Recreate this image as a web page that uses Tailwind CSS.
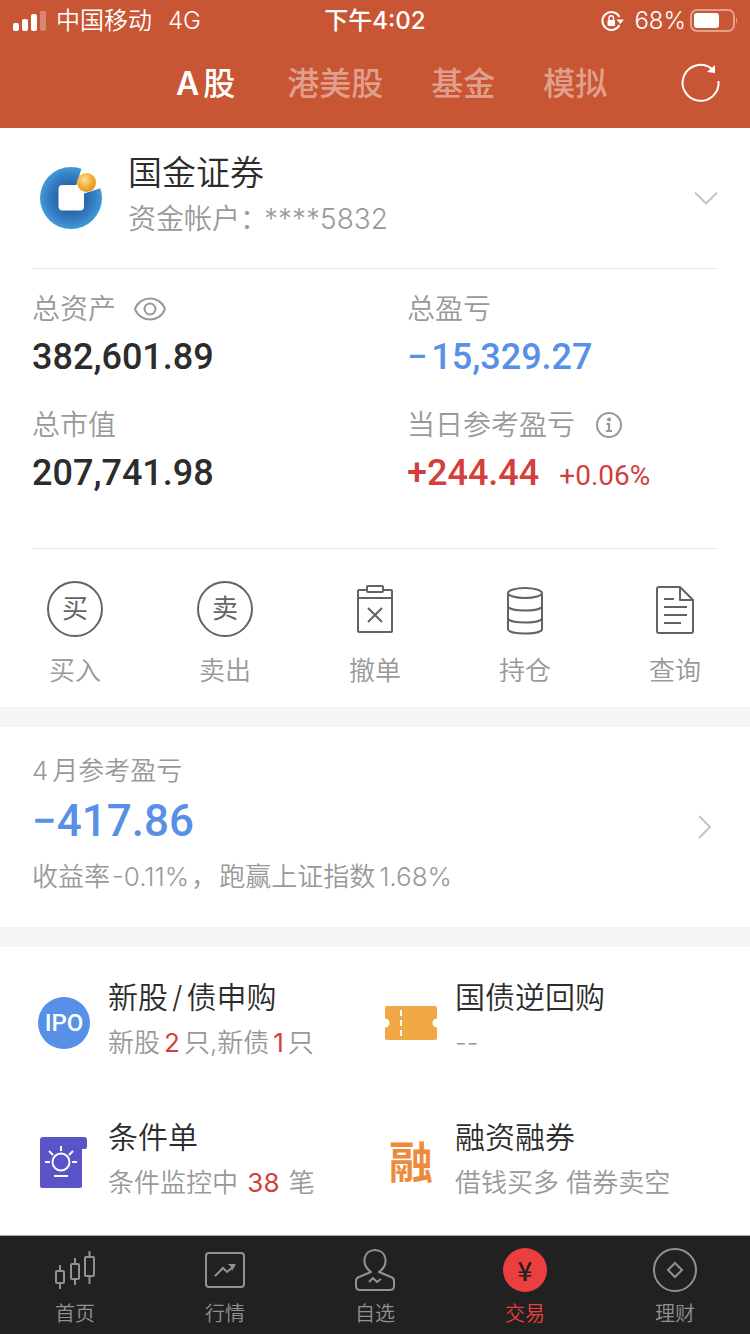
<!DOCTYPE html>
<html lang="zh-CN">
<head>
<meta charset="utf-8">
<meta name="viewport" content="width=device-width, initial-scale=1">
<title>交易</title>
<script src="https://cdn.jsdelivr.net/npm/@tailwindcss/browser@4"></script>
</head>
<body class="bg-white font-['Inter','Noto_Sans_CJK_SC',sans-serif] font-[350] text-[#999999]">
<div class="flex min-h-screen flex-col">

  <header class="bg-[#c85533] text-white">
    <div class="grid h-10 grid-cols-[1fr_auto_1fr] items-center px-3 pt-0.5 text-2xl">
      <div class="flex items-center">
        <svg class="mr-2 h-5 w-9" viewBox="0 0 36 20" fill="#fff" aria-hidden="true">
          <rect x="1" y="12" width="6" height="8" rx="2"/><rect x="10" y="8" width="6" height="12" rx="2"/><rect x="19" y="3" width="6" height="17" rx="2"/><rect x="28" y="-1" width="6" height="21" rx="2" opacity=".3"/>
        </svg>
        <span>中国移动</span><span class="ml-4">4G</span>
      </div>
      <div class="font-medium">下午4:02</div>
      <div class="flex items-center justify-end">
        <svg class="mr-2.5 h-6 w-6" viewBox="0 0 24 24" fill="none" stroke="#fff" stroke-width="2" aria-label="方向锁定">
          <path d="M19.500 16A9 9 0 1 1 19.500 8"/><path d="M16.500 10.500h7.500l-3.700 4.500z" fill="#fff" stroke="none"/>
          <rect x="7.500" y="11" width="7.500" height="6" rx="1" fill="#fff" stroke="none"/><path d="M9 11V9a2.200 2.200 0 0 1 4.500 0v2" stroke-width="1.500"/>
        </svg>
        <span>68%</span>
        <svg class="ml-1 h-6 w-12" viewBox="0 0 48 24" fill="none" aria-label="电量">
          <rect x="1" y="1" width="43" height="21" rx="6" stroke="#fff" stroke-opacity=".45" stroke-width="2"/><rect x="4" y="4" width="25" height="15" rx="3" fill="#fff"/><path d="M46 8q2 3.500 0 7z" fill="#fff" opacity=".5"/>
        </svg>
      </div>
    </div>
    <div class="flex h-22 items-center justify-between pr-7">
      <div class="flex flex-1 gap-12 pl-44 text-[32px] leading-10 font-medium text-white/45">
        <button type="button" class="mr-1 whitespace-nowrap text-white"><span class="mr-1 font-semibold">A</span>股</button>
        <button type="button" class="whitespace-nowrap">港美股</button>
        <button type="button" class="whitespace-nowrap">基金</button>
        <button type="button" class="whitespace-nowrap">模拟</button>
      </div>
      <button type="button" aria-label="刷新">
        <svg class="h-11 w-11" viewBox="0 0 44 44" fill="none" stroke="#fff" stroke-width="2">
          <path d="M40.500 19A18 18 0 1 1 33.500 6.500"/><path d="M37 3v8l-8-1z" fill="#fff" stroke="none"/>
        </svg>
      </button>
    </div>
  </header>

  <main>
    <section class="mx-8 flex h-[141px] items-center border-b border-[#ececec]">
      <svg class="ml-2 h-[62px] w-[62px] shrink-0" viewBox="0 0 62 62" aria-hidden="true">
        <defs>
          <radialGradient id="ring" cx=".5" cy=".5" r=".5"><stop offset=".4" stop-color="#2864a8"/><stop offset=".75" stop-color="#357fc4"/><stop offset="1" stop-color="#419ad8"/></radialGradient>
          <radialGradient id="ball" cx=".4" cy=".35" r=".65"><stop offset="0" stop-color="#fde3a0"/><stop offset=".5" stop-color="#f5b63c"/><stop offset="1" stop-color="#e8922a"/></radialGradient>
        </defs>
        <circle cx="31" cy="31" r="31" fill="url(#ring)"/>
        <path d="M42 0H64V20L44 26.500L36 19Z" fill="#fff"/>
        <rect x="18.500" y="18" width="25.500" height="25.500" rx="4" fill="#fff"/>
        <circle cx="46.500" cy="15.500" r="9.500" fill="url(#ball)"/>
      </svg>
      <div class="ml-6.5 flex-1 pb-1">
        <h1 class="text-[34px] leading-10 text-[#2c2c2c]">国金证券</h1>
        <p class="mt-1.5 text-[28px] leading-10">资金帐户：<span class="-ml-1">****5832</span></p>
      </div>
      <button type="button" class="-mr-0.5" aria-label="切换账户">
        <svg class="h-7 w-7" viewBox="0 0 28 28" fill="none" stroke="#c4c4c4" stroke-width="2"><path d="M3 8.500L14 19.500L25 8.500"/></svg>
      </button>
    </section>

    <section class="grid grid-cols-2 gap-y-8 pt-6 pb-13 text-[28px] leading-8">
      <div class="pl-8">
        <div class="flex items-center">总资产
          <button type="button" class="ml-4" aria-label="隐藏金额"><svg class="h-6 w-9" viewBox="0 0 36 24" fill="none" stroke="#999" stroke-width="2"><path d="M3 12C8 -2 28 -2 33 12C28 26 8 26 3 12Z"/><circle cx="18" cy="12" r="5.500"/></svg></button>
        </div>
        <div class="mt-3 font-['Roboto'] text-4xl leading-10 font-medium text-[#2c2c2c]">382,601.89</div>
      </div>
      <div class="pl-8">
        <div>总盈亏</div>
        <div class="mt-3 font-['Roboto'] text-4xl leading-10 font-medium text-[#5890e8]"><span class="mr-1">−</span>15,329.27</div>
      </div>
      <div class="pl-8">
        <div>总市值</div>
        <div class="mt-3 font-['Roboto'] text-4xl leading-10 font-medium text-[#2c2c2c]">207,741.98</div>
      </div>
      <div class="pl-8">
        <div class="flex items-center">当日参考盈亏
          <button type="button" class="ml-5" aria-label="说明"><svg class="h-7 w-7" viewBox="0 0 28 28" fill="none" stroke="#999" stroke-width="2"><circle cx="14" cy="14" r="12"/><circle cx="14" cy="8.500" r="2" fill="#999" stroke="none"/><path d="M11.500 13H14v7M11 20h6" stroke-width="2.200"/></svg></button>
        </div>
        <div class="mt-3 flex items-baseline gap-5 font-['Roboto'] text-4xl leading-10 font-medium text-[#d33f3a]">+244.44<span class="text-[28px] font-normal">+0.06%</span></div>
      </div>
    </section>

    <hr class="mx-8 border-t border-[#ececec]">
    <section class="grid grid-cols-5 pt-8 pb-5 text-[26px] leading-8">
      <button type="button" class="flex flex-col items-center gap-4.5">
        <span class="flex h-14 w-14 items-center justify-center rounded-full border-2 border-[#636363] text-[26px] font-normal text-[#636363]">买</span>买入
      </button>
      <button type="button" class="flex flex-col items-center gap-4.5">
        <span class="flex h-14 w-14 items-center justify-center rounded-full border-2 border-[#636363] text-[26px] font-normal text-[#636363]">卖</span>卖出
      </button>
      <button type="button" class="flex flex-col items-center gap-4.5">
        <svg class="h-14 w-14" viewBox="0 0 56 56" fill="none" stroke="#636363" stroke-width="2" stroke-linejoin="round"><path d="M20 9H12q-1 0-1 1V50q0 1 1 1H44q1 0 1-1V10q0-1-1-1H36M11 17H45M21 27L35 41M35 27L21 41"/><rect x="20" y="5" width="16" height="6" rx="1"/></svg>撤单
      </button>
      <button type="button" class="flex flex-col items-center gap-4.5">
        <svg class="h-14 w-14" viewBox="0 0 56 56" fill="none" stroke="#636363" stroke-width="2"><ellipse cx="28" cy="12" rx="17" ry="5"/><path d="M11 12V48C11 54 45 54 45 48V12M11 25C11 31 45 31 45 25M11 37C11 43 45 43 45 37"/></svg>持仓
      </button>
      <button type="button" class="flex flex-col items-center gap-4.5">
        <svg class="h-14 w-14" viewBox="0 0 56 56" fill="none" stroke="#636363" stroke-width="2" stroke-linejoin="round"><path d="M33 6H12q-2 0-2 2V50q0 2 2 2H44q2 0 2-2V19ZM33 6V19H46M17 18H27M17 26H40M17 34H40M17 42H34"/></svg>查询
      </button>
    </section>

    <div class="h-5 bg-[#f5f5f5]"></div>

    <a href="#month" class="flex h-50 items-center px-8">
      <div class="flex-1 pb-1.5 text-[26px] leading-8">
        <div><span class="mr-1">4</span>月参考盈亏</div>
        <div class="mt-2.5 font-['Roboto'] text-[44px] leading-12 font-medium text-[#5890e8]">−417.86</div>
        <div class="mt-4">收益率<span class="mx-0.5">-0.11%</span>，<span class="ml-0.5">跑赢上证指数</span><span class="ml-1">1.68%</span></div>
      </div>
      <svg class="h-7 w-7" viewBox="0 0 28 28" fill="none" stroke="#c4c4c4" stroke-width="2"><path d="M9 3L20 14L9 25"/></svg>
    </a>

    <div class="h-5 bg-[#f5f5f5]"></div>

    <section class="grid grid-cols-[347fr_403fr] gap-y-14.5 pt-7.5 pb-8 text-[26px] leading-8">
      <a href="#ipo" class="flex items-center pl-9.5">
        <span class="mt-2.5 mr-4.5 flex h-13 w-13 items-center justify-center rounded-full bg-[#5890e8] font-['Roboto'] text-2xl font-medium text-white">IPO</span>
        <span class="flex flex-col gap-2.5"><span class="text-[30px] leading-10 text-[#2c2c2c]">新股<span class="mx-1">/</span>债申购</span><span>新股<span class="mx-1 font-normal text-[#d33f3a]">2</span>只,新债<span class="mx-1 font-normal text-[#d33f3a]">1</span>只</span></span>
      </a>
      <a href="#repo" class="flex items-center pl-9.5">
        <svg class="mt-2.5 mr-4.5 h-13 w-13" viewBox="0 0 52 52"><path d="M2 9H50q2 0 2 2v10.500a4.500 4.500 0 0 0 0 9V41q0 2-2 2H2q-2 0-2-2V30.500a4.500 4.500 0 0 0 0-9V11q0-2 2-2Z" fill="#f0a844"/><path d="M16 13v26" stroke="#fff" stroke-width="2" stroke-dasharray="6 4"/></svg>
        <span class="flex flex-col gap-2.5"><span class="text-[30px] leading-10 text-[#2c2c2c]">国债逆回购</span><span>--</span></span>
      </a>
      <a href="#condition" class="flex items-center pl-9.5">
        <svg class="mt-2.5 mr-4.5 h-13 w-13" viewBox="0 0 52 52"><path d="M5 0H46q3 0 3 3v7q0 2-2 2H44V49q0 2-2 2H4q-2 0-2-2V3q0-3 3-3Z" fill="#5955c9"/><path d="M16 39H30M7 25h5M34 25h5M23 9v5M11 14l4 4M35 14l-4 4" stroke="#fff" stroke-width="2"/><circle cx="23" cy="25" r="8.500" fill="none" stroke="#fff" stroke-width="2"/></svg>
        <span class="flex flex-col gap-2.5"><span class="text-[30px] leading-10 text-[#2c2c2c]">条件单</span><span>条件监控中 <span class="mx-0.5 font-normal text-[#d33f3a]">38</span> 笔</span></span>
      </a>
      <a href="#margin" class="flex items-center pl-9.5">
        <span class="mt-2.5 mr-4.5 flex h-13 w-13 items-center justify-center text-[44px] font-bold text-[#ec8b3c]">融</span>
        <span class="flex flex-col gap-2.5"><span class="text-[30px] leading-10 text-[#2c2c2c]">融资融券</span><span>借钱买多 借券卖空</span></span>
      </a>
    </section>
  </main>

  <nav class="mt-auto grid h-[99px] grid-cols-5 border-t border-[#a8aaa8] bg-[#212121] pt-3 text-xl leading-7 text-[#929292]">
    <a href="#home" class="flex flex-col items-center gap-2">
      <svg class="h-11 w-11" viewBox="0 0 44 44" fill="none" stroke="#929292" stroke-width="2"><rect x="3" y="23" width="8" height="12" rx="1"/><rect x="18" y="16" width="8" height="15" rx="1"/><rect x="32" y="9" width="9" height="19" rx="1"/><path d="M7 17v6M7 35v6M22 10v6M22 31v6M36.500 3v6M36.500 28v8"/></svg>首页
    </a>
    <a href="#quotes" class="flex flex-col items-center gap-2">
      <svg class="h-11 w-11" viewBox="0 0 44 44" fill="none" stroke="#929292" stroke-width="2"><rect x="3" y="5" width="38" height="34" rx="3"/><path d="M12 28L20 20L24 24L31 18"/><path d="M24.500 16H33L29 23L27.500 18Z" fill="#929292" stroke="none"/></svg>行情
    </a>
    <a href="#watchlist" class="flex flex-col items-center gap-2">
      <svg class="h-11 w-11" viewBox="0 0 44 44" fill="none" stroke="#929292" stroke-width="2" stroke-linejoin="round"><path d="M18 24C7 16 11 2 22 2S37 16 26 24L38 29Q41 30 41 33V38Q41 42 37 42H7Q3 42 3 38V33Q3 30 6 29Z"/><path d="M16 34L20 30L24 34L28 31"/></svg>自选
    </a>
    <a href="#trade" class="flex flex-col items-center gap-2 text-[#eb3e3e]" aria-current="page">
      <span class="flex h-11 w-11 items-center justify-center rounded-full bg-[#eb3e3e] font-['Noto_Sans_CJK_JP'] text-[26px] leading-6 font-medium text-[#212121]">¥</span>交易
    </a>
    <a href="#wealth" class="flex flex-col items-center gap-2">
      <svg class="h-11 w-11" viewBox="0 0 44 44" fill="none" stroke="#929292" stroke-width="2"><circle cx="22" cy="22" r="21"/><path d="M22 15L29 22L22 29L15 22Z"/></svg>理财
    </a>
  </nav>
</div>
</body>
</html>
